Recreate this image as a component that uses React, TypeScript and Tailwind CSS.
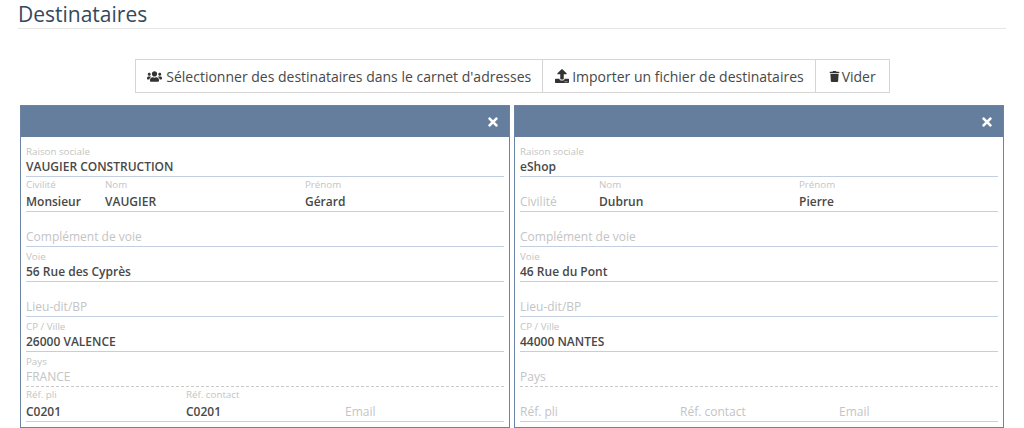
import { FaTimes, FaTrash, FaUpload, FaUsers } from "react-icons/fa";

type FieldProps = {
  label: string;
  value?: string;
  muted?: boolean;
  // rows with several columns keep a little more air under the label
  spaced?: boolean;
  className?: string;
};

// a label stays small above the value, and turns into a placeholder when there is no value
function Field({ label, value, muted, spaced, className = "" }: FieldProps) {
  return (
    <div className={`flex h-full min-w-0 flex-col justify-end ${className}`}>
      {value ? (
        <>
          <div className={`text-[9.75px] leading-[12px] text-[#c4c4c4] ${spaced ? "mb-[2px]" : ""}`}>{label}</div>
          <div
            className={`h-[18px] text-[12px] leading-[18px] ${
              muted ? "text-[#c4c4c4]" : "font-semibold text-[#484848]"
            }`}
          >
            {value}
          </div>
        </>
      ) : (
        <div className="h-[18px] text-[12px] leading-[18px] text-[#c4c4c4]">{label}</div>
      )}
    </div>
  );
}

function Row({ children, dashed }: { children: React.ReactNode; dashed?: boolean }) {
  return (
    <div
      className={`flex h-[35px] items-stretch border-b ${
        dashed ? "border-dashed border-[#c9c9c9]" : "border-[#c3cfe0]"
      }`}
    >
      {children}
    </div>
  );
}

type Recipient = {
  company: string;
  civility?: string;
  lastName: string;
  firstName: string;
  street: string;
  city: string;
  country?: string;
  refPli?: string;
  refContact?: string;
};

function RecipientCard({ r }: { r: Recipient }) {
  return (
    <div className="h-[323px] w-[490px] border border-[#6b84a3] bg-white">
      <div className="flex h-[31px] items-center justify-end bg-[#667e9e] pr-[9px] pt-[1px]">
        <FaTimes className="text-[14px] text-white" />
      </div>
      <div className="px-[5px] pt-[5px]">
        <Row>
          <Field label="Raison sociale" value={r.company} className="w-full" />
        </Row>
        <Row>
          <Field label="Civilité" value={r.civility} spaced className="w-[79px]" />
          <Field label="Nom" value={r.lastName} spaced className="w-[200px]" />
          <Field label="Prénom" value={r.firstName} spaced className="flex-1" />
        </Row>
        <Row>
          <Field label="Complément de voie" className="w-full" />
        </Row>
        <Row>
          <Field label="Voie" value={r.street} className="w-full" />
        </Row>
        <Row>
          <Field label="Lieu-dit/BP" className="w-full" />
        </Row>
        <Row>
          <Field label="CP / Ville" value={r.city} className="w-full" />
        </Row>
        <Row dashed>
          <Field label="Pays" value={r.country} muted className="w-full" />
        </Row>
        <Row>
          <Field label="Réf. pli" value={r.refPli} spaced className="w-[160px]" />
          <Field label="Réf. contact" value={r.refContact} spaced className="w-[159px]" />
          <Field label="Email" className="flex-1" />
        </Row>
      </div>
    </div>
  );
}

export default function App() {
  return (
    <div className="h-[428px] w-[1024px] overflow-hidden bg-white font-['Open_Sans',sans-serif]">
      <div className="mx-[18px] h-[29px] border-b border-[#e6e6e6]">
        <h2 className="text-[21px] leading-[28px] text-[#34495e]">Destinataires</h2>
      </div>

      <div className="mt-[30px] flex justify-center pl-[1px]">
        <div className="flex h-[34px] border border-[#d5d5d5] text-[14px] text-[#484848]">
          <button className="flex items-center gap-[4px] px-[11px]">
            <FaUsers className="text-[15px] text-[#333333]" />
            Sélectionner des destinataires dans le carnet d'adresses
          </button>
          <button className="flex items-center gap-[3px] border-l border-[#d5d5d5] pl-[12px] pr-[11px]">
            <FaUpload className="text-[14px] text-[#333333]" />
            Importer un fichier de destinataires
          </button>
          <button className="flex items-center gap-[2px] border-l border-[#d5d5d5] pl-[13px] pr-[13px]">
            <FaTrash className="text-[11px] text-[#333333]" />
            Vider
          </button>
        </div>
      </div>

      <div className="ml-[20px] mt-[12px] flex gap-[4px]">
        <RecipientCard
          r={{
            company: "VAUGIER CONSTRUCTION",
            civility: "Monsieur",
            lastName: "VAUGIER",
            firstName: "Gérard",
            street: "56 Rue des Cyprès",
            city: "26000 VALENCE",
            country: "FRANCE",
            refPli: "C0201",
            refContact: "C0201",
          }}
        />
        <RecipientCard
          r={{
            company: "eShop",
            lastName: "Dubrun",
            firstName: "Pierre",
            street: "46 Rue du Pont",
            city: "44000 NANTES",
          }}
        />
      </div>
    </div>
  );
}
